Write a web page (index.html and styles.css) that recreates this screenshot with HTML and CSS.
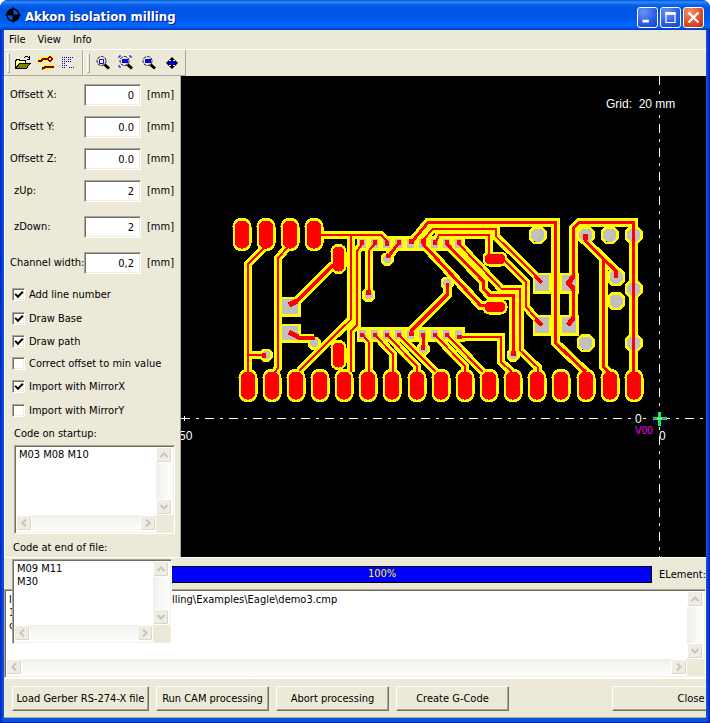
FILE: index.html
```html
<!DOCTYPE html>
<html lang="en">
<head>
<meta charset="utf-8">
<title>Akkon isolation milling</title>
<link rel="stylesheet" href="styles.css">
</head>
<body>
<svg class="defs" aria-hidden="true">
  <symbol id="up" viewBox="0 0 8 6"><path d="M.5 5 4 1.5 7.5 5" fill="none" stroke="#c6c5ba" stroke-width="2"/></symbol>
  <symbol id="down" viewBox="0 0 8 6"><path d="M.5 1 4 4.500 7.500 1" fill="none" stroke="#c6c5ba" stroke-width="2"/></symbol>
  <symbol id="left" viewBox="0 0 6 8"><path d="M5 .5 1.500 4 5 7.500" fill="none" stroke="#c6c5ba" stroke-width="2"/></symbol>
  <symbol id="right" viewBox="0 0 6 8"><path d="M1 .5 4.500 4 1 7.500" fill="none" stroke="#c6c5ba" stroke-width="2"/></symbol>
  <symbol id="glass" viewBox="0 0 16 16"><circle cx="6.500" cy="6" r="4.500" fill="#ece9d8" stroke="#111" stroke-width="1" stroke-dasharray="3 1"/><path d="M9.500 9.500 14 13.500" stroke="#000" stroke-width="3"/></symbol>
</svg>
<div class="window">
  <header class="titlebar">
    <svg class="app-icon" viewBox="0 0 16 16"><circle cx="8" cy="8" r="6" fill="#0058e6" stroke="#000" stroke-width="1.500"/><path d="M8 8V1.500A6.500 6.500 0 0 0 1.500 8ZM8 8v6.500A6.500 6.500 0 0 0 14.500 8Z"/><path d="M8 0v16M0 8h16" stroke="#000"/></svg>
    <h1>Akkon isolation milling</h1>
    <button class="cap" aria-label="Minimize"><svg viewBox="0 0 21 21"><path d="M5 13h7v3H5z" fill="#fff"/></svg></button>
    <button class="cap" aria-label="Maximize"><svg viewBox="0 0 21 21"><path d="M5 6.500h11M5.500 5v11h10V5" fill="none" stroke="#fff" stroke-width="1.300"/><path d="M5 4.500h11v3H5z" fill="#fff"/></svg></button>
    <button class="cap cap-close" aria-label="Close window"><svg viewBox="0 0 21 21"><path d="m5 5 11 11m0-11-11 11" stroke="#fff" stroke-width="2.600"/></svg></button>
  </header>
  <nav class="menu"><button>File</button><button>View</button><button>Info</button></nav>
  <div class="toolbars">
    <div class="toolbar">
      <button aria-label="Open"><svg viewBox="0 0 16 16" shape-rendering="crispEdges"><path d="M.5 13.500V5.500h1v-1h3v1h6v3" fill="#ffff80" stroke="#000"/><path d="M.5 13.500 4.500 8.500H15L11.500 13.500Z" fill="#808000" stroke="#000"/><path d="M9 2.500h1M10 1.500h3M13 2.500h1M14.500 1v4M12 4.500h3" fill="none" stroke="#000"/></svg></button>
      <button aria-label="Paths"><svg viewBox="0 0 16 16" shape-rendering="crispEdges"><path d="M0 6h3l2-2h6M4 14l3-2h9" fill="none" stroke="#ff0" stroke-width="4"/><circle cx="12" cy="4" r="3.500" fill="#ff0"/><path d="M0 6h3l2-2h6M4 14l3-2h9" fill="none" stroke="#800000" stroke-width="2"/><circle cx="12" cy="4" r="2" fill="#ece9d8" stroke="#800000" stroke-width="1.500"/></svg></button>
      <button aria-label="Code"><svg viewBox="0 0 16 16"><path d="M1 2.500h12M1 4.500h4M7 4.500h4M1 6.500h9M1 8.500h4M1 10.500h5M1 12.500h4M8 12.500h6" fill="none" stroke="#0000c0" stroke-dasharray="1 1"/></svg></button>
    </div>
    <div class="toolbar toolbar-zoom">
      <button aria-label="Zoom window"><svg viewBox="0 0 16 16"><use href="#glass"/><path d="M4.500 4.500h4v4h-4z" fill="#fff" stroke="#00f"/></svg></button>
      <button aria-label="Zoom all"><svg viewBox="0 0 16 16"><use href="#glass"/><path d="M4 4h6v4H4z" fill="#00f"/><path d="M1 3V1h2M11 1h2v2M1 10v2h2" fill="none" stroke="#00f"/></svg></button>
      <button aria-label="Zoom"><svg viewBox="0 0 16 16"><use href="#glass"/><path d="M4 4h6v4H4z" fill="#00f"/></svg></button>
      <button aria-label="Pan"><svg viewBox="0 0 16 16"><path d="M8 3v10M3 8h10" stroke="#000" stroke-width="2"/><path d="m8 2 3 3H5ZM8 14l3-3H5ZM2 8l3-3v6ZM14 8l-3-3v6Z"/><path d="M5 6h6v4H5z" fill="#00f"/></svg></button>
    </div>
  </div>
  <main class="work">
    <aside class="panel">
      <div class="fields">
        <label for="ox">Offsett X:</label><input id="ox" value="0"><span>[mm]</span>
        <label for="oy">Offsett Y:</label><input id="oy" value="0.0"><span>[mm]</span>
        <label for="oz">Offsett Z:</label><input id="oz" value="0.0"><span>[mm]</span>
        <label class="inset" for="zu">zUp:</label><input id="zu" value="2"><span>[mm]</span>
        <label class="inset" for="zd">zDown:</label><input id="zd" value="2"><span>[mm]</span>
        <label for="cw">Channel width:</label><input id="cw" value="0,2"><span>[mm]</span>
      </div>
      <div class="checks">
        <label><input type="checkbox" checked>Add line number</label>
        <label><input type="checkbox" checked>Draw Base</label>
        <label><input type="checkbox" checked>Draw path</label>
        <label><input type="checkbox">Correct offset to min value</label>
        <label><input type="checkbox" checked>Import with MirrorX</label>
        <label><input type="checkbox">Import with MirrorY</label>
      </div>
      <label class="caption" for="start">Code on startup:</label>
      <div class="memo memo-start">
        <textarea id="start">M03 M08 M10</textarea>
        <div class="vbar"><i><svg><use href="#up"/></svg></i><i><svg><use href="#down"/></svg></i></div>
        <div class="hbar"><i><svg><use href="#left"/></svg></i><i><svg><use href="#right"/></svg></i></div>
      </div>
      <label class="caption caption-end" for="end">Code at end of file:</label>
      <div class="memo memo-end">
        <textarea id="end">M09 M11
M30</textarea>
        <div class="vbar"><i><svg><use href="#up"/></svg></i><i><svg><use href="#down"/></svg></i></div>
        <div class="hbar"><i><svg><use href="#left"/></svg></i><i><svg><use href="#right"/></svg></i></div>
      </div>
    </aside>
    <section class="view" aria-label="Board">
      <svg viewBox="181 76 525 481" preserveAspectRatio="xMaxYMid meet" shape-rendering="crispEdges">
        <defs>
          <rect id="pad" x="-7" y="-14" width="14" height="28" rx="6"/>
          <rect id="padv" x="-6" y="-12" width="11" height="25" rx="5"/>
          <rect id="padh" x="-10" y="-5" width="20" height="10" rx="4"/>
          <path id="hole" d="M-3-6.500h6L6.500-3v6L3 6.500h-6L-6.500 3v-6Z"/>
          <path id="via" d="M-2-4h4l2 2v4l-2 2h-4l-2-2v-4Z"/>
          <g id="thin">
            <path d="M264 248 248 264V372M248 355H265"/>
            <path d="M288 247 278 258V368L275 372"/>
            <path d="M321 235H381L387 241V244M350.500 235V320L299 371"/>
            <path d="M363 243 357 251V325L351 331V372"/>
            <path d="M375 244 368.500 251V293"/>
            <path d="M423 244V240L433 229H495.500V236L542 282"/>
            <path d="M435 244 439 235H489V256"/>
            <path d="M459 244 501 288.500H519.500V350L537.500 367V372"/>
            <path d="M504 260 526 282V307L542 325"/>
            <path d="M363 335 368.500 342V372M375 335 393 354V372M387 335 417 366V372M399 335 436 372M435 335 465 366V372M447 335 483 372M459 337H501V362L512 372"/>
          </g>
          <g id="thick">
            <path d="M289 305 297 301 333 265M289 332 298 338H314"/>
            <path d="M399 243 387 258M411 243 428 222.500H555.500V343L586 372"/>
            <path d="M423 244 480 305H488M447 244 483 281V288L489 295H513V353"/>
            <path d="M447 283V295L411 331V336M423 335V349"/>
            <path d="M633.500 372V222.500H579L573.500 228V277L569 283 573.500 288V318L569 326"/>
            <path d="M585.500 235V241L616 271V278M603.500 259V367L609 373"/>
          </g>
          <g id="rounds">
            <use href="#pad" x="242" y="234.500"/><use href="#pad" x="266" y="234.500"/><use href="#pad" x="290" y="234.500"/><use href="#pad" x="314" y="234.500"/>
            <use href="#pad" x="248" y="385.500"/><use href="#pad" x="272" y="385.500"/><use href="#pad" x="296" y="385.500"/><use href="#pad" x="320" y="385.500"/><use href="#pad" x="344" y="385.500"/><use href="#pad" x="368" y="385.500"/><use href="#pad" x="392" y="385.500"/><use href="#pad" x="417" y="385.500"/><use href="#pad" x="441" y="385.500"/><use href="#pad" x="465" y="385.500"/><use href="#pad" x="489" y="385.500"/><use href="#pad" x="513" y="385.500"/><use href="#pad" x="537" y="385.500"/><use href="#pad" x="561" y="385.500"/><use href="#pad" x="586" y="385.500"/><use href="#pad" x="610" y="385.500"/><use href="#pad" x="634" y="385.500"/>
            <use href="#padv" x="339" y="258.500"/><use href="#padv" x="339" y="354.500"/><use href="#padh" x="495" y="259"/><use href="#padh" x="495" y="307"/>
          </g>
          <g id="holes">
            <use href="#hole" x="537.500" y="235"/><use href="#hole" x="585.500" y="235"/><use href="#hole" x="609.500" y="235"/><use href="#hole" x="633.500" y="235"/><use href="#hole" x="616" y="277"/><use href="#hole" x="616" y="301"/><use href="#hole" x="633.500" y="289"/><use href="#hole" x="633.500" y="343"/><use href="#hole" x="585.500" y="343"/>
            <use href="#via" x="266" y="355"/><use href="#via" x="314" y="343"/><use href="#via" x="387" y="259"/><use href="#via" x="368.500" y="295"/><use href="#via" x="447" y="283"/><use href="#via" x="423" y="349"/><use href="#via" x="513" y="355"/>
            <path d="M282 299h16v15h-16zM282 326h16v14h-16zM535 275h14v16h-14zM562 275h14v16h-14zM535 317h14v16h-14zM562 317h14v16h-14z"/>
          </g>
        </defs>
        <g class="axes"><path d="M181 418.500H706M659.500 76V557"/></g>
        <g class="clearance">
          <use href="#thin" stroke-width="8"/><use href="#thick" stroke-width="9"/>
          <use href="#rounds" stroke-width="5"/><use href="#holes" stroke-width="5"/>
          <path class="fill" d="M357 236H465V251H357ZM357 327H465V342H357Z"/>
        </g>
        <g class="hole-fill"><use href="#holes"/>
          <path d="M359 239h7v9h-7zM371 239h7v9h-7zM383 239h7v9h-7zM395 239h7v9h-7zM407 239h7v9h-7zM419 239h7v9h-7zM431 239h7v9h-7zM443 239h7v9h-7zM455 239h7v9h-7zM359 330h7v9h-7zM371 330h7v9h-7zM383 330h7v9h-7zM395 330h7v9h-7zM407 330h7v9h-7zM419 330h7v9h-7zM431 330h7v9h-7zM443 330h7v9h-7zM455 330h7v9h-7z"/>
        </g>
        <g class="copper">
          <use class="fill" href="#rounds"/>
          <use href="#thin" stroke-width="2"/><use href="#thick" stroke-width="3"/>
          <path stroke-width="5" d="M289 305 297 301M289 332 298 337M573.500 276 568.500 283 573.500 289M573.500 318 568 325M585.500 234V240M387 257l2-2M368.500 290v5M513 351v5M262 355h4M411 239v5M423 239v5M411 332v4"/>
          <path stroke-width="4" d="M535 276 542 283M535 319 542 325M362 240v5M375 240v5M387 241v5M399 240v5M435 240v5M447 240v5M459 240v5M362 333v4M375 333v4M387 333v4M399 333v4M423 333v4M435 333v4M447 333v4M457 337h5M423 345v5M298 338H315M616 270v8"/>
        </g>
        <path class="blank" d="M634 411h10v14h-10zM604 97h75v14h-75z"/>
        <path d="M184.500 416v5M643 418.500h2" stroke="#fff"/>
        <circle cx="659.500" cy="418.500" r="6.500" class="origin-ring"/>
        <path d="M659.500 412v14M653 418.500h14" stroke="#00ff40" stroke-width="3"/>
        <path d="M653 418.500h4M662 418.500h4" stroke="#f0f"/>
        <path d="M657 418.500h5" stroke="#fff"/>
        <g class="marks" shape-rendering="auto"><text x="606" y="108" xml:space="preserve">Grid:  20 mm</text><text x="635" y="423">0</text><text x="659" y="440">0</text><text x="179" y="440">50</text><text class="tool" x="635" y="434">V00</text></g>
      </svg>
    </section>
  </main>
  <div class="status"><div class="progress" role="progressbar" aria-valuenow="100" aria-label="Progress">100%</div><span>ELement:</span></div>
  <div class="memo log">
    <textarea aria-label="Log" readonly>l&#9;lling\Examples\Eagle\demo3.cmp
1
c</textarea>
    <div class="vbar"><i><svg><use href="#up"/></svg></i><i><svg><use href="#down"/></svg></i></div>
    <div class="hbar"><i><svg><use href="#left"/></svg></i><i><svg><use href="#right"/></svg></i></div>
  </div>
  <footer class="actions">
    <button class="wide">Load Gerber RS-274-X file</button><button>Run CAM processing</button><button>Abort processing</button><button>Create G-Code</button><button class="close">Close</button>
  </footer>
</div>
</body>
</html>
```

FILE: styles.css
```css
*, *::before, *::after { box-sizing: border-box; }
body {
  margin: 0;
  background: #fff;
  font: 11px/13px "DejaVu Sans Condensed", "DejaVu Sans", sans-serif;
  color: #000;
}
button, input, textarea { font: inherit; color: inherit; border-radius: 0; margin: 0; }
svg { display: block; }
.defs { position: absolute; width: 0; height: 0; }

.window {
  display: flex;
  flex-direction: column;
  min-height: 100vh;
  padding: 0 4px 4px;
  border-radius: 8px 8px 0 0;
  overflow: hidden;
  background: linear-gradient(90deg, #0018c0, #0855dd 3px, #0855dd calc(100% - 3px), #0018b0);
  border-bottom: 1px solid #001da0;
}

.titlebar {
  display: flex;
  align-items: center;
  gap: 2px;
  height: 30px;
  margin: 0 -4px;
  padding: 4px 6px 0 5px;
  background: linear-gradient(#0a4fd0, #2a8cff 2px, #0a5fea 5px, #0054e3 9px, #0058ea 18px, #0066ff 24px, #0060f8 27px, #0038b8);
}
.titlebar h1 {
  flex: 1;
  margin: 0 0 0 2px;
  font: bold 13px/16px "DejaVu Sans Condensed", sans-serif;
  color: #fff;
  text-shadow: 1px 1px #0a1883;
}
.app-icon { width: 16px; height: 16px; margin-bottom: 4px; }
.cap {
  width: 21px;
  height: 21px;
  padding: 0;
  border: 1px solid #fff;
  border-radius: 3px;
  background: radial-gradient(circle at 30% 20%, #6d94f2, #2a5ce0 60%, #1944c8);
}
.cap svg { width: 19px; height: 19px; }
.cap-close { background: radial-gradient(circle at 30% 20%, #f0926e, #df4a22 60%, #b9310f); }

.menu {
  display: flex;
  gap: 12px;
  height: 20px;
  padding: 0 5px;
  background: #ece9d8;
  border-bottom: 1px solid #fff;
}
.menu button { padding: 0; border: 0; background: none; }

.toolbars { display: flex; height: 26px; background: #ece9d8; }
.toolbar {
  display: flex;
  align-items: center;
  gap: 7px;
  padding: 0 5px 0 3px;
  border-right: 1px solid #aca899;
  border-bottom: 1px solid #aca899;
}
.toolbar::before {
  content: "";
  width: 3px;
  height: 20px;
  margin-right: -2px;
  border: 1px solid #fff;
  border-right-color: #aca899;
  border-bottom-color: #aca899;
}
.toolbar button { width: 16px; height: 16px; padding: 0; border: 0; background: none; }
.toolbar svg { width: 16px; height: 16px; }
.toolbar-zoom { border-left: 1px solid #fff; }

.work { display: grid; grid-template-columns: 177px 1fr; flex: 1; }
.panel {
  position: relative;
  display: flex;
  flex-direction: column;
  padding: 8px 5px 3px 7px;
  background: #ece9d8;
  border-right: 1px solid #aca899;
  border-left: 1px solid #fff;
}
.fields {
  display: grid;
  grid-template-columns: 74px 57px 1fr;
  grid-template-rows: 32px 32px 32px 36px 36px 22px;
  margin-left: -2px;
}
.fields label, .fields span { line-height: 22px; white-space: nowrap; }
.fields span { padding-left: 6px; }
.fields .inset { padding-left: 4px; }
.fields input { height: 22px; padding: 0 6px 0 0; text-align: right; }
.fields input, .checks input, .memo {
  background: #fff;
  border: 1px solid;
  border-color: #aca899 #fff #fff #aca899;
  box-shadow: inset 1px 1px #716f64, inset -1px -1px #f1efe2;
}
.checks {
  display: grid;
  grid-template-rows: 24px 24px 22px 22px 24px 24px;
  margin-top: 8px;
}
.checks label { display: flex; align-items: center; gap: 4px; white-space: nowrap; }
.checks input { appearance: none; display: grid; place-items: center; width: 13px; height: 13px; }
.checks input:checked::after {
  content: "";
  width: 8px;
  height: 5px;
  margin-bottom: 2px;
  border: solid #000;
  border-width: 0 0 2px 2px;
  transform: rotate(-45deg);
}
.caption { margin: 5px 0 5px 2px; }
.caption-end { margin: 7px 0 0 1px; }

.memo {
  display: grid;
  grid-template: 1fr 17px / 1fr 17px;
  padding: 1px;
  background: #ece9d8;
}
.memo textarea {
  display: block;
  width: 100%;
  height: 100%;
  padding: 1px 3px;
  border: 0;
  resize: none;
  overflow: hidden;
  white-space: pre;
  background: #fff;
}
.vbar, .hbar { display: flex; justify-content: space-between; }
.vbar { flex-direction: column; background: linear-gradient(90deg, #f0efea, #fff); }
.hbar { background: linear-gradient(#f0efea, #fff); }
.vbar i, .hbar i {
  display: grid;
  place-items: center;
  width: 16px;
  height: 16px;
  border: 1px solid #fff;
  border-radius: 2px;
  background: #efede3;
  box-shadow: inset -1px -1px #dad7c8;
}
.memo i svg { width: 8px; height: 8px; }
.memo-start { width: 161px; height: 89px; margin-left: 2px; }
.memo-end { position: absolute; top: calc(100% + 2px); left: 7px; width: 160px; height: 85px; z-index: 1; }

.view { display: flex; background: #000; min-width: 0; }
.view svg { width: 100%; height: 100%; }
.axes { fill: none; stroke: #fff; stroke-dasharray: 9 6 3 6; }
.clearance { fill: #ff0; stroke: #ff0; }
#thin, #thick { fill: none; }
.clearance .fill, .copper .fill { stroke: none; }
.hole-fill { fill: #c0c0c0; }
.copper { fill: none; stroke: #f00; }
.copper .fill { fill: #f00; }
.blank { fill: #000; }
.origin-ring { fill: none; stroke: #00008b; }
.marks { fill: #fff; font: 12px "Liberation Sans", sans-serif; }
.marks .tool { fill: #f0f; font-size: 10px; }

.status {
  display: flex;
  align-items: center;
  gap: 7px;
  height: 32px;
  padding: 1px 0 0 108px;
  background: #ece9d8;
  border-top: 1px solid #fff;
}
.progress {
  flex: 1;
  height: 17px;
  border: 1px solid #000;
  background: #00f;
  color: #ff0;
  line-height: 14px;
  text-align: center;
}
.log { height: 90px; margin: 0; border-width: 1px 1px 2px; }
.log textarea { padding: 2px 3px; tab-size: 163px; }

.actions {
  display: flex;
  gap: 7px;
  height: 39px;
  padding: 7px 0 0 8px;
  overflow: hidden;
  background: #ece9d8;
  border-bottom: 1px solid #aca899;
}
.actions button {
  flex: none;
  width: 113px;
  height: 25px;
  padding: 0;
  white-space: nowrap;
  background: #ece9d8;
  border: 1px solid;
  border-color: #fff #716f64 #716f64 #fff;
  box-shadow: inset -1px -1px #aca899;
}
.actions .wide { width: 137px; }
.actions .close { width: 158px; margin-left: 96px; }
```
